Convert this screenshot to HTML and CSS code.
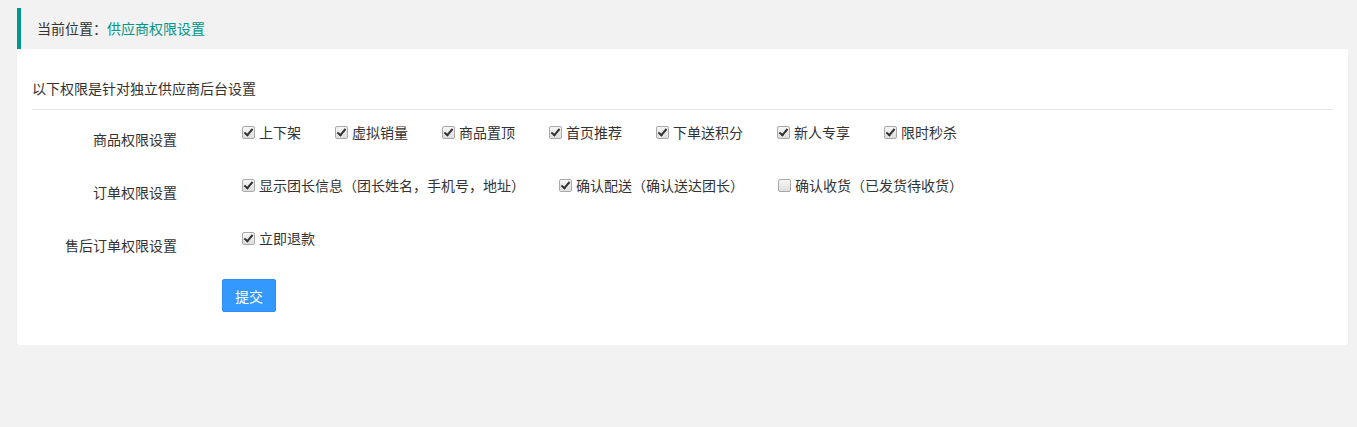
FILE: index.html
```html
<!DOCTYPE html>
<html lang="zh-CN">
<head>
<meta charset="utf-8">
<title>供应商权限设置</title>
<link rel="stylesheet" href="styles.css">
</head>
<body>
<div class="page">
  <div class="crumb">当前位置：<span class="crumb-cur">供应商权限设置</span></div>
  <div class="card">
    <div class="card-head">以下权限是针对独立供应商后台设置</div>
    <form class="form">
      <div class="row">
        <div class="label">商品权限设置</div>
        <div class="opts">
          <label class="opt"><input type="checkbox" checked>上下架</label>
          <label class="opt"><input type="checkbox" checked>虚拟销量</label>
          <label class="opt"><input type="checkbox" checked>商品置顶</label>
          <label class="opt"><input type="checkbox" checked>首页推荐</label>
          <label class="opt"><input type="checkbox" checked>下单送积分</label>
          <label class="opt"><input type="checkbox" checked>新人专享</label>
          <label class="opt"><input type="checkbox" checked>限时秒杀</label>
        </div>
      </div>
      <div class="row">
        <div class="label">订单权限设置</div>
        <div class="opts">
          <label class="opt"><input type="checkbox" checked>显示团长信息（团长姓名，手机号，地址）</label>
          <label class="opt"><input type="checkbox" checked>确认配送（确认送达团长）</label>
          <label class="opt"><input type="checkbox">确认收货（已发货待收货）</label>
        </div>
      </div>
      <div class="row">
        <div class="label">售后订单权限设置</div>
        <div class="opts">
          <label class="opt"><input type="checkbox" checked>立即退款</label>
        </div>
      </div>
      <div class="actions">
        <button type="button" class="btn">提交</button>
      </div>
    </form>
  </div>
</div>
</body>
</html>
```

FILE: styles.css
```css
html, body {
  margin: 0;
  padding: 0;
}
body {
  background: #f2f2f2;
  font-family: "Microsoft YaHei", "Noto Sans CJK SC", "Liberation Sans", sans-serif;
  font-size: 14px;
  color: #333;
}
.page {
  padding: 8px 9px 0 17px;
}
.crumb {
  height: 41px;
  line-height: 41px;
  border-left: 4px solid #009688;
  padding-left: 16px;
  color: #333;
}
.crumb-cur {
  color: #009688;
}
.card {
  background: #fff;
  border-radius: 2px;
  box-shadow: 0 1px 2px rgba(0, 0, 0, 0.05);
  padding: 18px 15px 33px;
}
.card-head {
  height: 42px;
  line-height: 42px;
  border-bottom: 1px solid #e6e6e6;
}
.form {
  margin: 0;
}
.row {
  display: flex;
  height: 53px;
}
.label {
  width: 145px;
  flex: none;
  text-align: right;
  padding-top: 19px;
  line-height: 20px;
}
.opts {
  margin-left: 61px;
  padding-top: 12px;
  display: flex;
  align-items: flex-start;
  line-height: 20px;
}
.opt {
  display: flex;
  align-items: center;
  margin-right: 30px;
  white-space: nowrap;
  cursor: pointer;
}
.opt input {
  -webkit-appearance: none;
  appearance: none;
  position: relative;
  width: 13px;
  height: 13px;
  margin: 0 4px 0 4px;
  border: 1px solid #a9a9a9;
  border-radius: 2px;
  background: linear-gradient(#f6f6f6, #dedede);
  box-sizing: border-box;
  flex: none;
}
.opt input:checked::after {
  content: "";
  position: absolute;
  left: 3px;
  top: 0px;
  width: 3px;
  height: 7px;
  border-right: 2px solid #333;
  border-bottom: 2px solid #333;
  transform: rotate(40deg);
}
.actions {
  margin-top: 10px;
  padding-left: 190px;
}
.btn {
  width: 54px;
  height: 33px;
  padding: 0;
  border: 1px solid #2f8ff0;
  border-radius: 2px;
  background: #3399ff;
  color: #fff;
  font-family: inherit;
  font-size: 14px;
  cursor: pointer;
}
```
